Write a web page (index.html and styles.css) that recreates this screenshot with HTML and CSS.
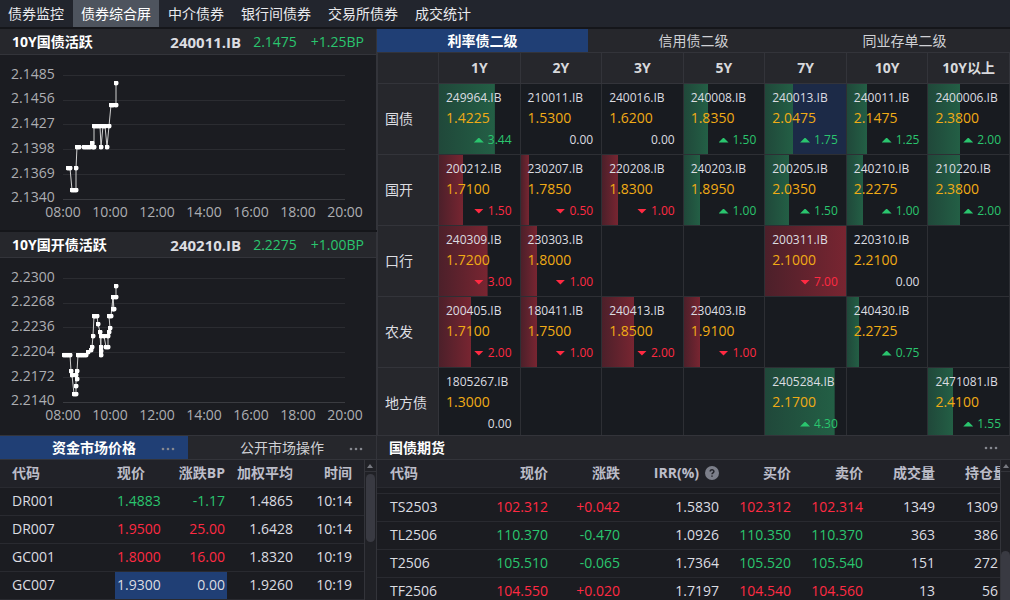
FILE: index.html
```html
<!DOCTYPE html>
<html lang="zh-CN">
<head>
<meta charset="utf-8">
<title>债券综合屏</title>
<link rel="stylesheet" href="styles.css">
</head>
<body>
<div class="app">
<nav class="nav">
<a href="#">债券监控</a><a href="#" class="active" aria-current="page">债券综合屏</a><a href="#">中介债券</a><a href="#">银行间债券</a><a href="#">交易所债券</a><a href="#">成交统计</a>
</nav>
<main class="screen">
<div class="charts">
<section class="panel">
<header class="bar"><h2>10Y国债活跃</h2><b class="code">240011.IB</b><span class="up">2.1475</span><span class="up chg">+1.25BP</span></header>
<svg class="chart" viewBox="0 0 376 175" role="img" aria-label="10Y国债活跃">
<path class="grid" d="M63 20.500H345M63 45.500H345M63 69.500H345M63 94.500H345M63 119.500H345"/><path class="axis" d="M63 144.500H345"/>
<g class="tick"><text x="11" y="24">2.1485</text><text x="11" y="48">2.1456</text><text x="11" y="73">2.1427</text><text x="11" y="98">2.1398</text><text x="11" y="123">2.1369</text><text x="11" y="147">2.1340</text></g>
<g class="tick mid"><text x="63" y="162">08:00</text><text x="110" y="162">10:00</text><text x="157" y="162">12:00</text><text x="204" y="162">14:00</text><text x="251" y="162">16:00</text><text x="298" y="162">18:00</text><text x="345" y="162">20:00</text></g>
<defs><marker id="dot" viewBox="0 0 6 6" refX="3" refY="3" markerWidth="5" markerHeight="5" markerUnits="userSpaceOnUse"><circle cx="3" cy="3" r="3" fill="#fff"/></marker></defs>
<polyline class="line" points="68,113 70,113 72,135 74,135 76,135 76,113 77,92 79,92 84,92 86,92 88,92 90,92 92,88 93,92 94,92 94,71 96,71 98,71 100,71 101,92 103,71 105,71 107,92 109,71 111,50 113,50 116,50 116,28"/>
</svg>
</section>
<section class="panel">
<header class="bar"><h2>10Y国开债活跃</h2><b class="code">240210.IB</b><span class="up">2.2275</span><span class="up chg">+1.00BP</span></header>
<svg class="chart" viewBox="0 0 376 175" role="img" aria-label="10Y国开债活跃">
<path class="grid" d="M63 20.500H345M63 45.500H345M63 69.500H345M63 94.500H345M63 119.500H345"/><path class="axis" d="M63 144.500H345"/>
<g class="tick"><text x="11" y="24">2.2300</text><text x="11" y="48">2.2268</text><text x="11" y="73">2.2236</text><text x="11" y="98">2.2204</text><text x="11" y="123">2.2172</text><text x="11" y="147">2.2140</text></g>
<g class="tick mid"><text x="63" y="162">08:00</text><text x="110" y="162">10:00</text><text x="157" y="162">12:00</text><text x="204" y="162">14:00</text><text x="251" y="162">16:00</text><text x="298" y="162">18:00</text><text x="345" y="162">20:00</text></g>
<polyline class="line" points="64,97 66,97 68,97 70,97 71,113 72,117 74,136 76,136 76,128 76,117 77,121 77,113 78,97 80,97 82,97 84,97 86,97 88,94 91,92 92,89 93,78 94,58 95,58 97,58 98,66 100,74 101,97 101,93 101,89 101,78 104,78 106,89 108,89 108,78 109,74 110,70 109,58 111,58 113,39 113,51 114,51 113,39 116,39 116,28"/>
</svg>
</section>
</div>
<section class="panel matrix">
<div class="tabs"><button class="tab on">利率债二级</button><button class="tab">信用债二级</button><button class="tab">同业存单二级</button></div>
<table class="heat">
<colgroup><col class="lab"><col><col><col><col><col><col><col></colgroup>
<thead><tr><th></th><th>1Y</th><th>2Y</th><th>3Y</th><th>5Y</th><th>7Y</th><th>10Y</th><th>10Y以上</th></tr></thead>
<tbody>
<tr><th>国债</th>
<td class="g" style="--w:69%"><p>249964.IB</p><p>1.4225</p><p>3.44</p></td>
<td><p>210011.IB</p><p>1.5300</p><p>0.00</p></td>
<td><p>240016.IB</p><p>1.6200</p><p>0.00</p></td>
<td class="g" style="--w:30%"><p>240008.IB</p><p>1.8350</p><p>1.50</p></td>
<td class="g sel" style="--w:35%"><p>240013.IB</p><p>2.0475</p><p>1.75</p></td>
<td class="g" style="--w:25%"><p>240011.IB</p><p>2.1475</p><p>1.25</p></td>
<td class="g" style="--w:40%"><p>2400006.IB</p><p>2.3800</p><p>2.00</p></td></tr>
<tr><th>国开</th>
<td class="r" style="--w:30%"><p>200212.IB</p><p>1.7100</p><p>1.50</p></td>
<td class="r" style="--w:10%"><p>230207.IB</p><p>1.7850</p><p>0.50</p></td>
<td class="r" style="--w:20%"><p>220208.IB</p><p>1.8300</p><p>1.00</p></td>
<td class="g" style="--w:20%"><p>240203.IB</p><p>1.8950</p><p>1.00</p></td>
<td class="g" style="--w:30%"><p>200205.IB</p><p>2.0350</p><p>1.50</p></td>
<td class="g" style="--w:20%"><p>240210.IB</p><p>2.2275</p><p>1.00</p></td>
<td class="g" style="--w:40%"><p>210220.IB</p><p>2.3800</p><p>2.00</p></td></tr>
<tr><th>口行</th>
<td class="r" style="--w:60%"><p>240309.IB</p><p>1.7200</p><p>3.00</p></td>
<td class="r" style="--w:20%"><p>230303.IB</p><p>1.8000</p><p>1.00</p></td>
<td></td><td></td>
<td class="r" style="--w:100%"><p>200311.IB</p><p>2.1000</p><p>7.00</p></td>
<td><p>220310.IB</p><p>2.2100</p><p>0.00</p></td>
<td></td></tr>
<tr><th>农发</th>
<td class="r" style="--w:40%"><p>200405.IB</p><p>1.7100</p><p>2.00</p></td>
<td class="r" style="--w:20%"><p>180411.IB</p><p>1.7500</p><p>1.00</p></td>
<td class="r" style="--w:40%"><p>240413.IB</p><p>1.8500</p><p>2.00</p></td>
<td class="r" style="--w:20%"><p>230403.IB</p><p>1.9100</p><p>1.00</p></td>
<td></td>
<td class="g" style="--w:15%"><p>240430.IB</p><p>2.2725</p><p>0.75</p></td>
<td></td></tr>
<tr><th>地方债</th>
<td><p>1805267.IB</p><p>1.3000</p><p>0.00</p></td>
<td></td><td></td><td></td>
<td class="g" style="--w:86%"><p>2405284.IB</p><p>2.1700</p><p>4.30</p></td>
<td></td>
<td class="g" style="--w:31%"><p>2471081.IB</p><p>2.4100</p><p>1.55</p></td></tr>
</tbody>
</table>
</section>
<section class="panel">
<div class="tabs"><button class="tab on">资金市场价格<svg class="more" viewBox="0 0 14 4"><circle cx="2" cy="2" r="1.300"/><circle cx="7" cy="2" r="1.300"/><circle cx="12" cy="2" r="1.300"/></svg></button><button class="tab">公开市场操作<svg class="more" viewBox="0 0 14 4"><circle cx="2" cy="2" r="1.300"/><circle cx="7" cy="2" r="1.300"/><circle cx="12" cy="2" r="1.300"/></svg></button></div>
<div class="list">
<div class="clip">
<table class="data funds">
<colgroup><col class="f1"><col class="f2"><col class="f3"><col class="f4"><col class="f5"></colgroup>
<thead><tr><th>代码</th><th>现价</th><th>涨跌BP</th><th>加权平均</th><th>时间</th></tr></thead>
<tbody>
<tr><td>DR001</td><td class="up">1.4883</td><td class="up">-1.17</td><td>1.4865</td><td>10:14</td></tr>
<tr><td>DR007</td><td class="down">1.9500</td><td class="down">25.00</td><td>1.6428</td><td>10:14</td></tr>
<tr><td>GC001</td><td class="down">1.8000</td><td class="down">16.00</td><td>1.8320</td><td>10:19</td></tr>
<tr><td>GC007</td><td class="pick">1.9300</td><td class="pick">0.00</td><td>1.9260</td><td>10:19</td></tr>
</tbody>
</table>
</div>
<div class="scroll"><svg class="arrow" viewBox="0 0 10 11"><path d="M2 8L5 4L8 8Z"/></svg><div class="track"><div class="thumb"></div></div></div>
</div>
</section>
<section class="panel">
<header class="bar futures-bar"><h2>国债期货</h2><svg class="more" viewBox="0 0 14 4"><circle cx="2" cy="2" r="1.300"/><circle cx="7" cy="2" r="1.300"/><circle cx="12" cy="2" r="1.300"/></svg></header>
<div class="list">
<div class="clip">
<table class="data futures">
<colgroup><col><col class="q1"><col class="q2"><col class="q3"><col class="q2"><col class="q2"><col class="q2"><col class="q4"></colgroup>
<thead><tr><th>代码</th><th>现价</th><th>涨跌</th><th>IRR(%)<svg class="help" viewBox="0 0 14 14"><circle cx="7" cy="7" r="7" fill="#7c7f8a"/><path d="M5.200 5.600C5.200 3.200 8.900 3.200 8.900 5.500C8.900 6.900 7 6.800 7 8.300M7 9.500V10.800" fill="none" stroke="#23242a" stroke-width="1.500"/></svg></th><th>买价</th><th>卖价</th><th>成交量</th><th>持仓量</th></tr></thead>
<tbody>
<tr class="sliver"><td colspan="8"></td></tr>
<tr><td>TS2503</td><td class="down">102.312</td><td class="down">+0.042</td><td>1.5830</td><td class="down">102.312</td><td class="down">102.314</td><td>1349</td><td>1309</td></tr>
<tr><td>TL2506</td><td class="up">110.370</td><td class="up">-0.470</td><td>1.0926</td><td class="up">110.350</td><td class="up">110.370</td><td>363</td><td>386</td></tr>
<tr><td>T2506</td><td class="up">105.510</td><td class="up">-0.065</td><td>1.7364</td><td class="up">105.520</td><td class="up">105.540</td><td>151</td><td>272</td></tr>
<tr><td>TF2506</td><td class="down">104.550</td><td class="down">+0.020</td><td>1.7197</td><td class="down">104.540</td><td class="down">104.560</td><td>13</td><td>56</td></tr>
</tbody>
</table>
</div>
<div class="scroll low"><svg class="arrow" viewBox="0 0 10 11"><path d="M2 8L5 4L8 8Z"/></svg><div class="track"><div class="thumb"></div></div></div>
</div>
</section>
</main>
</div>
</body>
</html>
```
FILE: styles.css
```css
:root {
  --green: #2ac56e;
  --red: #ff2a42;
  --amber: #f0ab16;
  --blue: #203f75;
  --edge: #33343a;
}
* { box-sizing: border-box; }
body {
  margin: 0;
  background: #15161a;
  color: #dcdde1;
  font: 14px/20px "Open Sans", "Noto Sans CJK SC", sans-serif;
}
h2, p { margin: 0; font-size: 14px; }
.app { height: 100vh; display: flex; flex-direction: column; overflow: hidden; }
.nav { display: flex; gap: 1px; flex: none; height: 27px; background: #22252d; }
.nav a { padding: 0 8px; line-height: 28px; color: #e9eaed; text-decoration: none; }
.nav .active { background: #4e545e; color: #fff; }
.screen {
  flex: 1;
  min-height: 0;
  display: grid;
  grid-template-columns: minmax(0, 377fr) minmax(0, 633fr);
  grid-template-rows: 406px minmax(0, 1fr);
  padding-top: 2px;
}
.panel { min-width: 0; overflow: hidden; background: #1b1c21; border-right: 1px solid var(--edge); display: flex; flex-direction: column; }
.matrix, .panel:last-child { border-right: 0; }
.charts { display: flex; flex-direction: column; gap: 2px; min-width: 0; }
.charts .panel { border-right: 1px solid var(--edge); }
.charts .panel:last-child { flex: 1; }
.bar {
  display: flex;
  flex: none;
  align-items: center;
  gap: 12px;
  height: 26px;
  padding: 0 12px;
  background: #26272c;
  border-bottom: 1px solid var(--edge);
}
.bar h2 { color: #fff; margin-right: auto; }
.code { font-size: 15px; font-weight: 700; }
.chg { margin-left: 2px; }
.up { color: var(--green); }
.down { color: var(--red); }
.chart { display: block; width: 100%; flex: none; }
.grid { stroke: #2b2c31; }
.axis { stroke: #3a3b40; }
.tick { fill: #adaeb2; font-size: 14px; }
.mid { text-anchor: middle; }
.line { fill: none; stroke: #d0d0d0; marker: url(#dot); }

.tabs { display: flex; flex: none; height: 23px; background: #26272c; }
.tab {
  flex: 1;
  position: relative;
  padding: 0;
  border: 0;
  background: none;
  color: #d0d1d5;
  font: inherit;
}
.tab.on { background: var(--blue); color: #fff; font-weight: 700; }
.more { width: 14px; height: 4px; fill: #85888f; }
.tab .more { position: absolute; right: 13px; top: 11px; }

.heat { width: 100%; table-layout: fixed; border-collapse: collapse; }
.lab { width: 61px; }
.heat th { background: #26272c; border: 1px solid var(--edge); padding: 0; }
.heat thead th { height: 31px; font-weight: 700; color: #d8d9dc; }
.heat tbody th { text-align: left; padding-left: 7px; font-weight: 400; }
.heat td {
  height: 71px;
  padding: 4px 8px 0 7px;
  vertical-align: top;
  border: 1px solid #2d2f34;
  background-color: #181b20;
  background-repeat: no-repeat;
  background-size: var(--w) 100%;
}
.heat td.g { background-image: linear-gradient(90deg, #20483a, #235f45); }
.heat td.r { background-image: linear-gradient(90deg, #4c202a, #782531); }
.heat td.sel { background-color: #1c2a47; }
.heat p { line-height: 20px; color: var(--amber); }
.heat p:first-child { font-size: 12px; line-height: 20px; color: #dcdde1; }
.heat p:last-child {
  display: flex;
  justify-content: flex-end;
  align-items: center;
  gap: 4px;
  font-size: 12px;
  line-height: 24px;
  color: #dcdde1;
}
.heat .g p:last-child { color: var(--green); }
.heat .r p:last-child { color: var(--red); }
.heat .g p:last-child::before, .heat .r p:last-child::before {
  content: "";
  width: 10px;
  height: 5px;
  background: currentColor;
  clip-path: polygon(50% 0, 100% 100%, 0 100%);
}
.heat .r p:last-child::before { clip-path: polygon(0 0, 100% 0, 50% 100%); }

.screen > .panel:nth-child(n+3) { border-top: 1px solid var(--edge); }
.screen > .panel:nth-child(n+3) .tabs { height: 24px; border-bottom: 1px solid var(--edge); }
.futures-bar { height: 24px; }
.list { flex: 1; min-height: 0; display: flex; }
.clip { flex: 1; min-width: 0; overflow: hidden; }
.data { width: 100%; table-layout: fixed; border-collapse: collapse; }
.data th, .data td { height: 28px; padding: 0 2px; text-align: right; line-height: 20px; white-space: nowrap; border-bottom: 1px solid #292a30; }
.data th { height: 27px; font-weight: 700; color: #bcbdc9; background: #212228; }
.data th:first-child, .data td:first-child { text-align: left; padding-left: 12px; }
.funds th:nth-child(2), .funds td:nth-child(2) { text-align: left; }
.funds th:last-child, .funds td:last-child { padding-right: 12px; }
.data .pick { background: var(--blue); }
.f1 { width: 115px; }
.f2 { width: 48px; }
.f3 { width: 64px; }
.f4 { width: 68px; }
.futures { width: calc(100% + 9px); }
.q1 { width: 80px; }
.q2 { width: 72px; }
.q3 { width: 99px; }
.q4 { width: 72px; }
.data.futures tr > :first-child { padding-left: 13px; }
.futures td:last-child { padding-right: 11px; }
.futures .sliver td { height: 6px; padding: 0; }
.help { width: 14px; height: 14px; margin-left: 6px; vertical-align: -2px; }
.scroll { width: 12px; flex: none; display: flex; flex-direction: column; background: #202126; border-left: 1px solid var(--edge); }
.arrow { flex: none; width: 10px; height: 11px; fill: #777980; }
.track { flex: 1; padding: 2px 1px 0; border-top: 1px solid var(--edge); }
.thumb { height: 68px; border-radius: 5px; background: #393a42; }
.low { width: 10px; }
.low .track { padding: 79px 0 0; }
```
